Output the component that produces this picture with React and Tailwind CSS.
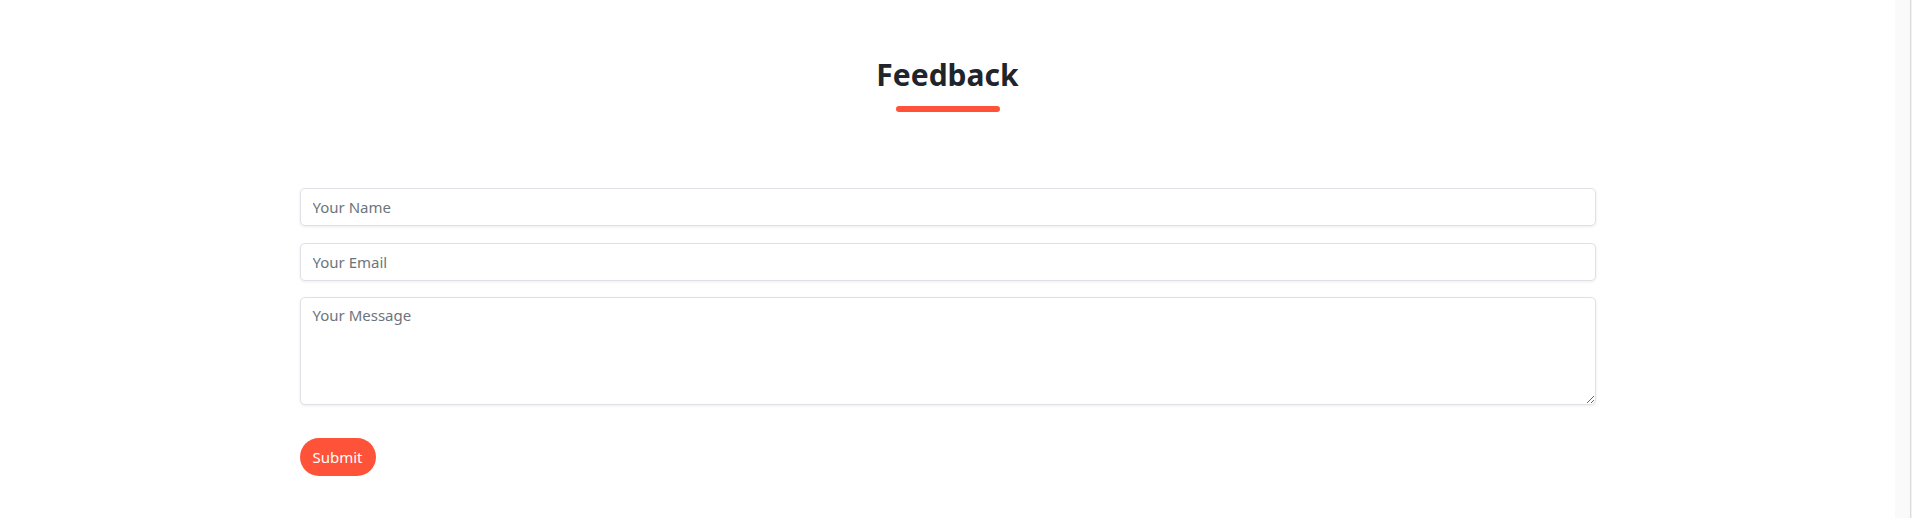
import React from 'react';

const fieldClass =
  'block w-full rounded-[5px] border border-[#dee2e6] bg-white px-3 text-[15px] text-[#212529] placeholder:text-[#6c757d] shadow-[0_1px_3px_rgba(0,0,0,0.08)] outline-none';

const App = () => {
  return (
    <div className="flex min-h-[518px] bg-white font-['Noto_Sans',sans-serif] text-[#212529]">
      {/* Page */}
      <div className="flex-1">
        <div className="mx-auto max-w-[1320px] px-3 pt-[57px]">
          {/* Heading */}
          <div className="flex flex-col items-center">
            <h2 className="text-[30px] font-bold leading-[1.2]">Feedback</h2>
            <div className="mt-[13px] h-[6px] w-[104px] rounded-full bg-[#ff5238]"></div>
          </div>

          {/* Form */}
          <form className="mt-[76px] flex flex-col" onSubmit={(e) => e.preventDefault()}>
            <input type="text" placeholder="Your Name" className={`${fieldClass} h-[38px]`} />
            <input type="email" placeholder="Your Email" className={`${fieldClass} mt-[17px] h-[38px]`} />
            <textarea placeholder="Your Message" className={`${fieldClass} mt-[16px] h-[108px] py-[6px]`}></textarea>
            <div className="mt-[33px]">
              <button
                type="submit"
                className="h-[38px] w-[76px] rounded-full bg-[#ff5339] text-[15px] text-white"
              >
                Submit
              </button>
            </div>
          </form>
        </div>
      </div>

      {/* Scrollbar track */}
      <div className="flex w-[17px] shrink-0">
        <div className="w-[15px] bg-[#fafafa]"></div>
        <div className="w-px bg-[#dcdcdc]"></div>
        <div className="w-px bg-[#f1f1f1]"></div>
      </div>
    </div>
  );
};

export default App;
